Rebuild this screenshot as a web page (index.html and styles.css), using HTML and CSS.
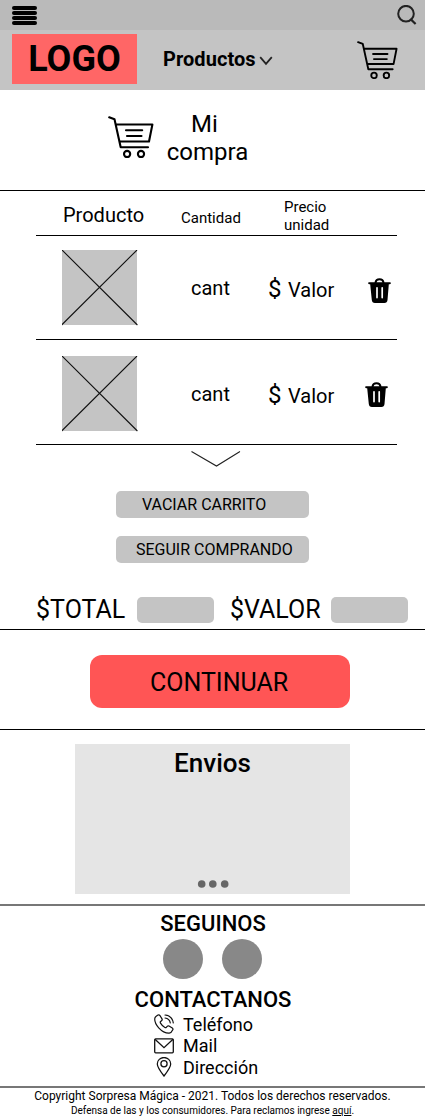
FILE: index.html
```html
<!DOCTYPE html>
<html lang="es">
<head>
<meta charset="utf-8">
<title>Mi compra</title>
<link rel="stylesheet" href="styles.css">
</head>
<body>
<svg class="sprite" width="0" height="0">
  <symbol id="cart" viewBox="0 0 46 42">
    <g fill="none" stroke="#000" stroke-width="2.1" stroke-linecap="round" stroke-linejoin="round">
      <path d="M1.2 1.3L6.5 3.3L12.7 31.2H40M8.4 8.5H44.4L41 25.5H11.8"/>
      <path d="M18 14.3H34.2M19 20H33.5"/>
      <circle cx="19.1" cy="38" r="3.1"/><circle cx="33" cy="38" r="3.1"/>
    </g>
  </symbol>
  <symbol id="trash" viewBox="0 0 23 25">
    <path fill="none" stroke="#000" stroke-width="2" d="M7.6 5V4.2Q8 1.2 11.5 1.2T15.4 4.2V5"/>
    <path d="M1 4.3H22Q23 4.3 22.8 5.6Q22.7 6.3 21.6 6.3H20.8L19.5 22Q19.2 25 16.4 25H6.9Q4.1 25 3.8 22L2.2 6.3H1.4Q.3 6.3 .2 5.6Q0 4.3 1 4.3Z"/>
    <path stroke="#fff" stroke-width="1.7" stroke-linecap="round" d="M9 9.8V19.6M14.2 9.8V19.6"/>
  </symbol>
</svg>

<header>
  <div class="topbar">
    <div class="menu"><i></i><i></i><i></i><i></i></div>
    <svg class="search" viewBox="0 0 20 21"><g fill="none" stroke="#222" stroke-width="2"><circle cx="9" cy="8.7" r="7.8"/><path d="M13.3 13.9L18.6 19" stroke-width="2.2"/></g></svg>
  </div>
  <nav class="navbar">
    <div class="logo">LOGO</div>
    <div class="products">Productos</div>
    <svg class="caret" viewBox="0 0 14 10"><path d="M1.2 1.2L7 7.8L12.8 1.2" fill="none" stroke="#222" stroke-width="1.8"/></svg>
    <svg class="nav-cart" preserveAspectRatio="none" viewBox="0 0 46 42"><use href="#cart"/></svg>
  </nav>
</header>

<main>
  <section class="title">
    <svg class="title-cart"><use href="#cart"/></svg>
    <h1><span>Mi</span>compra</h1>
  </section>

  <section class="table">
    <div class="row head">
      <div class="h-product">Producto</div>
      <div class="h-qty">Cantidad</div>
      <div class="h-price">Precio<br>unidad</div>
    </div>
    <div class="row item">
      <svg class="photo" viewBox="0 0 76 76"><rect width="75" height="75" fill="#c4c4c4"/><path d="M0 0L75.4 75M75 0L-.4 75" stroke="#111" stroke-width="1.1"/></svg>
      <div class="qty">cant</div><div class="dollar">$</div><div class="value">Valor</div>
      <svg class="trash"><use href="#trash"/></svg>
    </div>
    <div class="row item second">
      <svg class="photo" viewBox="0 0 76 76"><rect width="75" height="75" fill="#c4c4c4"/><path d="M0 0L75.4 75M75 0L-.4 75" stroke="#111" stroke-width="1.1"/></svg>
      <div class="qty">cant</div><div class="dollar">$</div><div class="value">Valor</div>
      <svg class="trash"><use href="#trash"/></svg>
    </div>
  </section>

  <section class="actions">
    <svg class="more" viewBox="0 0 50 16"><path d="M.5 .5L25.5 15L49 .5" fill="none" stroke="#222" stroke-width="1.1"/></svg>
    <div class="button empty">VACIAR CARRITO</div>
    <div class="button keep">SEGUIR COMPRANDO</div>
    <div class="totals">
      <span class="total">$TOTAL</span><i class="field"></i>
      <span class="amount">$VALOR</span><i class="field"></i>
    </div>
  </section>

  <section class="checkout"><div class="continue">CONTINUAR</div></section>

  <section class="shipping">
    <div class="card"><h2>Envios</h2>
      <svg class="dots" viewBox="0 0 32 8"><g fill="#666"><circle cx="4.7" cy="4" r="3.8"/><circle cx="15.8" cy="4" r="3.8"/><circle cx="27.7" cy="4" r="3.8"/></g></svg>
    </div>
  </section>
</main>

<footer>
  <section class="contact">
    <h3>SEGUINOS</h3>
    <div class="social"><i></i><i></i></div>
    <h3 class="contact-title">CONTACTANOS</h3>
    <ul>
      <li><svg viewBox="0 0 20 20"><g fill="none" stroke="#111" stroke-width="1.2" stroke-linecap="round" stroke-linejoin="round"><path d="M2.2 2.2L4 1Q5.2.5 6 1.6L8 4.9Q8.6 6 7.5 6.8L6.4 7.7Q6 8.3 6.5 9.1Q8.4 12.2 10.9 13.5Q11.8 14 12.3 13.4L13.2 12.3Q14 11.5 15 12L18.3 14Q19.3 14.8 18.8 15.8Q17.5 18.8 15.2 19.1Q9.8 19.3 4.7 13.8Q.7 9.3.7 5Q.8 3.1 2.2 2.2Z"/><path d="M11 1Q18.1 1.6 19.3 9M11 4Q15.6 4.6 16.3 9"/></g></svg><span>Teléfono</span></li>
      <li><svg viewBox="0 0 20 20"><g fill="none" stroke="#111" stroke-width="1.3"><rect x=".7" y="2.8" width="18.6" height="14" rx="1"/><path d="M1 3.2L10 11.7L19 3.2"/></g></svg><span>Mail</span></li>
      <li><svg viewBox="0 0 20 20"><g fill="none" stroke="#111" stroke-width="1.25"><path d="M10 19Q3.3 10.2 3.3 6.9A6.7 6.4 0 0 1 16.7 6.9Q16.7 10.2 10 19Z"/><circle cx="10" cy="6.8" r="3.1"/></g></svg><span>Dirección</span></li>
    </ul>
  </section>
  <section class="legal">
    <p>Copyright Sorpresa Mágica - 2021. Todos los derechos reservados.</p>
    <p class="small">Defensa de las y los consumidores. Para reclamos ingrese <u>aquí</u>.</p>
  </section>
</footer>
</body>
</html>
```
FILE: styles.css
```css
* { box-sizing: border-box; }
body { margin: 0; width: 425px; height: 1118px; overflow: hidden; background: #fff; color: #000; font-family: Roboto, "Liberation Sans", sans-serif; }
h1, h2, h3, p, ul { margin: 0; padding: 0; font-weight: 400; }
svg { display: block; flex: none; }
.sprite { position: absolute; }
div, span { white-space: nowrap; }

.topbar { height: 30px; background: #bababa; display: flex; justify-content: space-between; padding: 5px 8px 0 12px; }
.menu { width: 25px; padding-top: 1px; display: flex; flex-direction: column; gap: 1px; }
.menu i { height: 4px; border-radius: 2px; background: #000; }
.search { width: 20px; height: 21px; }
.navbar { height: 60px; background: #c4c4c4; display: flex; align-items: flex-start; padding: 4px 0 0 12px; }
.logo { width: 125px; height: 50px; background: #f66; font-weight: 700; font-size: 36px; line-height: 50px; text-align: center; }
.products { margin-left: 26px; width: 93px; font-weight: 700; font-size: 20px; letter-spacing: 0.05px; line-height: 50px; }
.caret { width: 14px; height: 10px; margin: 22px 0 0 3px; }
.nav-cart { width: 41px; height: 38px; margin: 7px 0 0 84px; }

.title { height: 101px; border-bottom: 1px solid #000; display: flex; padding: 26px 0 0 108px; }
.title-cart { width: 46px; height: 42px; }
.title h1 { width: 83px; margin: -6px 0 0 12px; font-size: 24px; line-height: 28px; text-align: center; }
.title h1 span { display: block; padding-right: 6px; }

.table { padding: 0 28px 0 36px; }
.row { display: flex; border-bottom: 1px solid #000; }
.head { height: 45px; padding-left: 26px; font-size: 15px; line-height: 18px; }
.h-product { width: 119px; padding-left: 1px; font-size: 20px; line-height: 48px; }
.h-qty { width: 103px; padding-top: 18px; }
.h-price { padding-top: 7px; }
.item { height: 104px; padding: 14px 0 0 26px; font-size: 20px; line-height: 24px; }
.photo { width: 76px; height: 76px; }
.qty { width: 77px; margin: 26px 0 0 53px; }
.dollar { width: 20px; margin-top: 27px; font-size: 24px; }
.value { width: 80px; margin-top: 28px; }
.trash { width: 23px; height: 25px; margin-top: 28px; }
.second { height: 105px; padding-top: 16px; }
.second .trash { margin: 26px 0 0 -3px; }

.actions { height: 185px; border-bottom: 1px solid #000; padding-top: 6px; }
.more { width: 50px; height: 16px; margin-left: 191px; }
.button { width: 193px; height: 27px; margin-left: 116px; border-radius: 5px; background: #c4c4c4; font-size: 16px; line-height: 27px; }
.empty { margin-top: 24px; padding-left: 26px; }
.keep { margin-top: 18px; padding-left: 20px; }
.totals { display: flex; margin-top: 34px; padding-left: 36px; font-size: 25px; line-height: 26px; }
.total { width: 101px; }
.amount { width: 101px; margin-left: 16px; }
.field { width: 77px; height: 26px; border-radius: 5px; background: #c4c4c4; }

.checkout { height: 100px; border-bottom: 1px solid #000; padding: 25px 0 0 90px; }
.continue { width: 260px; height: 53px; border-radius: 12px; background: #f55; font-size: 25px; line-height: 56px; padding-left: 60px; }

.shipping { height: 174px; padding: 13.5px 75px 0; }
.card { height: 150px; background: #e5e5e5; display: flex; flex-direction: column; align-items: center; justify-content: space-between; padding: 4px 0 5.5px; }
.card h2 { font-size: 26px; font-weight: 500; line-height: 30px; }
.dots { width: 32px; height: 8px; }

.contact { height: 182px; border-top: 2px solid #777; padding-top: 5px; }
h3 { font-size: 22px; font-weight: 500; line-height: 26px; padding-left: 1px; text-align: center; }
.social { display: flex; gap: 19px; padding: 1.5px 0 0 163px; }
.social i { width: 40px; height: 40px; border-radius: 50%; background: #888; }
.contact-title { margin-top: 8px; }
ul { list-style: none; padding: 1px 0 0 154px; }
li { display: flex; gap: 9px; height: 21.7px; font-size: 18px; line-height: 22px; }
li svg { width: 20px; height: 20px; margin-top: 0.5px; }
.legal { border-top: 2px solid #777; padding-top: 1px; text-align: center; }
.legal p { font-size: 12px; line-height: 14px; white-space: nowrap; }
.legal .small { font-size: 10px; line-height: 15px; }
```
